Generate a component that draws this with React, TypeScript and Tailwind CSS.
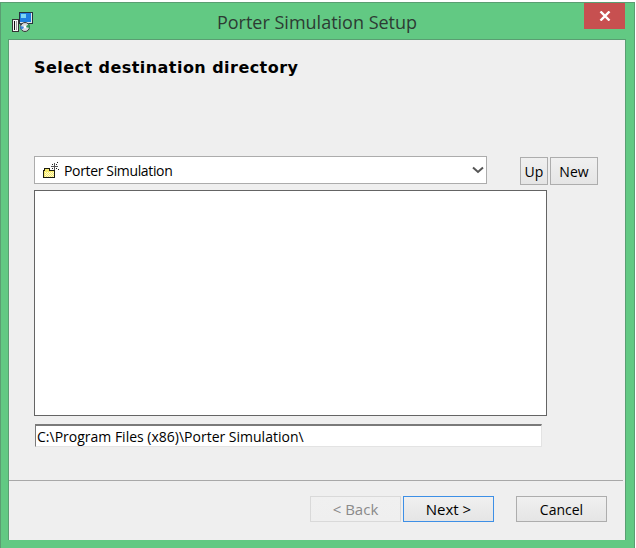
import React from 'react';

const uiFont = "font-['Open_Sans',sans-serif]";

function InstallerIcon() {
  return <svg width="22" height="22" viewBox="0 0 22 22" shapeRendering="crispEdges" className="shrink-0">
      <rect x="8" y="2" width="13" height="11" fill="#dfe6ea" stroke="#26323c" />
      <rect x="9" y="3" width="11" height="9" fill="#1f7fe0" />
      <rect x="10" y="4" width="5" height="4" fill="#7fd6f2" />
      <rect x="9" y="13" width="9" height="2" fill="#3c4a54" />
      <rect x="1.5" y="9.5" width="6" height="12" fill="#f6f6f6" stroke="#333" />
      <rect x="3" y="11" width="1" height="9" fill="#111" />
      <rect x="5" y="11" width="1" height="9" fill="#999" />
      <circle cx="14" cy="17" r="4.5" fill="#d6dade" stroke="#333" shapeRendering="auto" />
      <path d="M14 17 L18 14 L19 18 Z" fill="#2f9a5a" shapeRendering="auto" />
      <path d="M14 17 L10 20 L9 16 Z" fill="#3f86d8" shapeRendering="auto" />
      <circle cx="14" cy="17" r="1.4" fill="#fff" shapeRendering="auto" />
    </svg>;
}

function NewFolderIcon() {
  return <svg width="18" height="18" viewBox="0 0 18 18" shapeRendering="crispEdges" className="shrink-0">
      <path d="M1.5 9.5 H2.5 V7.5 H7.5 V9.5 H12.5 V16.5 H1.5 Z" fill="#f6e96a" stroke="#1c1c10" />
      <path d="M3 11 h1 v1 h-1 Z M5 11 h1 v1 h-1 Z M7 11 h1 v1 h-1 Z M9 11 h1 v1 h-1 Z M11 11 h1 v1 h-1 Z M4 12 h1 v1 h-1 Z M6 12 h1 v1 h-1 Z M8 12 h1 v1 h-1 Z M10 12 h1 v1 h-1 Z M3 13 h1 v1 h-1 Z M5 13 h1 v1 h-1 Z M7 13 h1 v1 h-1 Z M9 13 h1 v1 h-1 Z M11 13 h1 v1 h-1 Z M4 14 h1 v1 h-1 Z M6 14 h1 v1 h-1 Z M8 14 h1 v1 h-1 Z M10 14 h1 v1 h-1 Z M3 15 h1 v1 h-1 Z M5 15 h1 v1 h-1 Z M7 15 h1 v1 h-1 Z M9 15 h1 v1 h-1 Z M11 15 h1 v1 h-1 Z" fill="#fffbd0" />
      <path d="M12 2 h1 v7 h-1 Z M9 5 h7 v1 h-7 Z" fill="#555" />
      <path d="M10 3 h1 v1 h-1 Z M14 3 h1 v1 h-1 Z M10 7 h1 v1 h-1 Z M14 7 h1 v1 h-1 Z M15 1 h1 v1 h-1 Z M16 8 h1 v1 h-1 Z" fill="#222" />
    </svg>;
}

function DialogButton({ label, className }: { label: string; className: string }) {
  return <button className={`h-[26px] flex items-center justify-center border bg-gradient-to-b from-[#f0f0f0] to-[#e5e5e5] text-[15px] text-black ${className}`}>
      {label}
    </button>;
}

export default function App() {
  return <div className={`w-[636px] h-[548px] bg-white pt-[2px] overflow-hidden ${uiFont}`}>
      <div className="w-[635px] h-[546px] flex flex-col bg-[#62c983] border-t border-l border-r border-[#5a9e72] pl-[7px] pr-[9px]">
        <div className="h-[36px] shrink-0 flex items-start">
          <div className="w-[30px] ml-[3px] pt-[7px]">
            <InstallerIcon />
          </div>
          <div className="flex-1 pt-[6px] pl-[9px] text-center text-[18px] leading-[26px] text-[#2d3b33]">
            Porter Simulation Setup
          </div>
          <button className="w-[41px] h-[26px] flex items-center justify-center bg-[#c75050]">
            <svg width="12" height="10" viewBox="0 0 12 10" fill="none">
              <path d="M1.5 0.5 L10.5 9.5 M10.5 0.5 L1.5 9.5" stroke="#fff" strokeWidth="2.4" />
            </svg>
          </button>
        </div>

        <div className="w-[618px] h-[501px] flex flex-col bg-[#efefef] border-t border-r border-l border-[#5a9e72] pl-[25px]">
          <h1 className="mt-[16px] h-[24px] font-['DejaVu_Sans',sans-serif] font-bold text-[16px] tracking-[0.45px] leading-[24px] text-black">
            Select destination directory
          </h1>

          <div className="mt-[76px] flex items-start">
            <div className="w-[453px] h-[28px] flex items-center bg-white border border-[#acacac] pl-[7px] pr-[1px] text-[14px] tracking-[-0.35px] text-black">
              <NewFolderIcon />
              <span className="ml-[4px] flex-1">Porter Simulation</span>
              <svg width="14" height="8" viewBox="0 0 14 8" fill="none">
                <path d="M2 1.5 L7 6 L12 1.5" stroke="#555" strokeWidth="2" />
              </svg>
            </div>
            <DialogButton label="Up" className="w-[28px] h-[28px] ml-[33px] mt-[1px] border-[#adadad] !text-[14px]" />
            <DialogButton label="New" className="w-[48px] h-[28px] ml-[2px] mt-[1px] border-[#adadad] !text-[14px]" />
          </div>

          <div className="mt-[5px] w-[513px] h-[226px] bg-white border border-[#646464]" />

          <div className="mt-[8px] ml-[1px] w-[507px] h-[23px] flex items-center bg-white border-t-2 border-l border-t-[#7a7a7a] border-l-[#7a7a7a] border-r border-b border-r-[#e3e3e3] border-b-[#e3e3e3] pl-[1px] text-[14px] text-black">
            C:\Program Files (x86)\Porter Simulation\
          </div>

          <div className="mt-[33px] -ml-[25px] mr-[2px] h-px bg-[#a8a8a8]" />

          <div className="mt-[15px] flex">
            <DialogButton label="< Back" className="ml-[276px] w-[91px] border-[#d9d9d9] from-[#efefef] to-[#efefef] !text-[#8a8a8a]" />
            <DialogButton label="Next >" className="ml-[2px] w-[91px] border-[#3d8fe6]" />
            <DialogButton label="Cancel" className="ml-[22px] w-[91px] border-[#adadad] !text-[14px]" />
          </div>
        </div>
      </div>
    </div>;
}
